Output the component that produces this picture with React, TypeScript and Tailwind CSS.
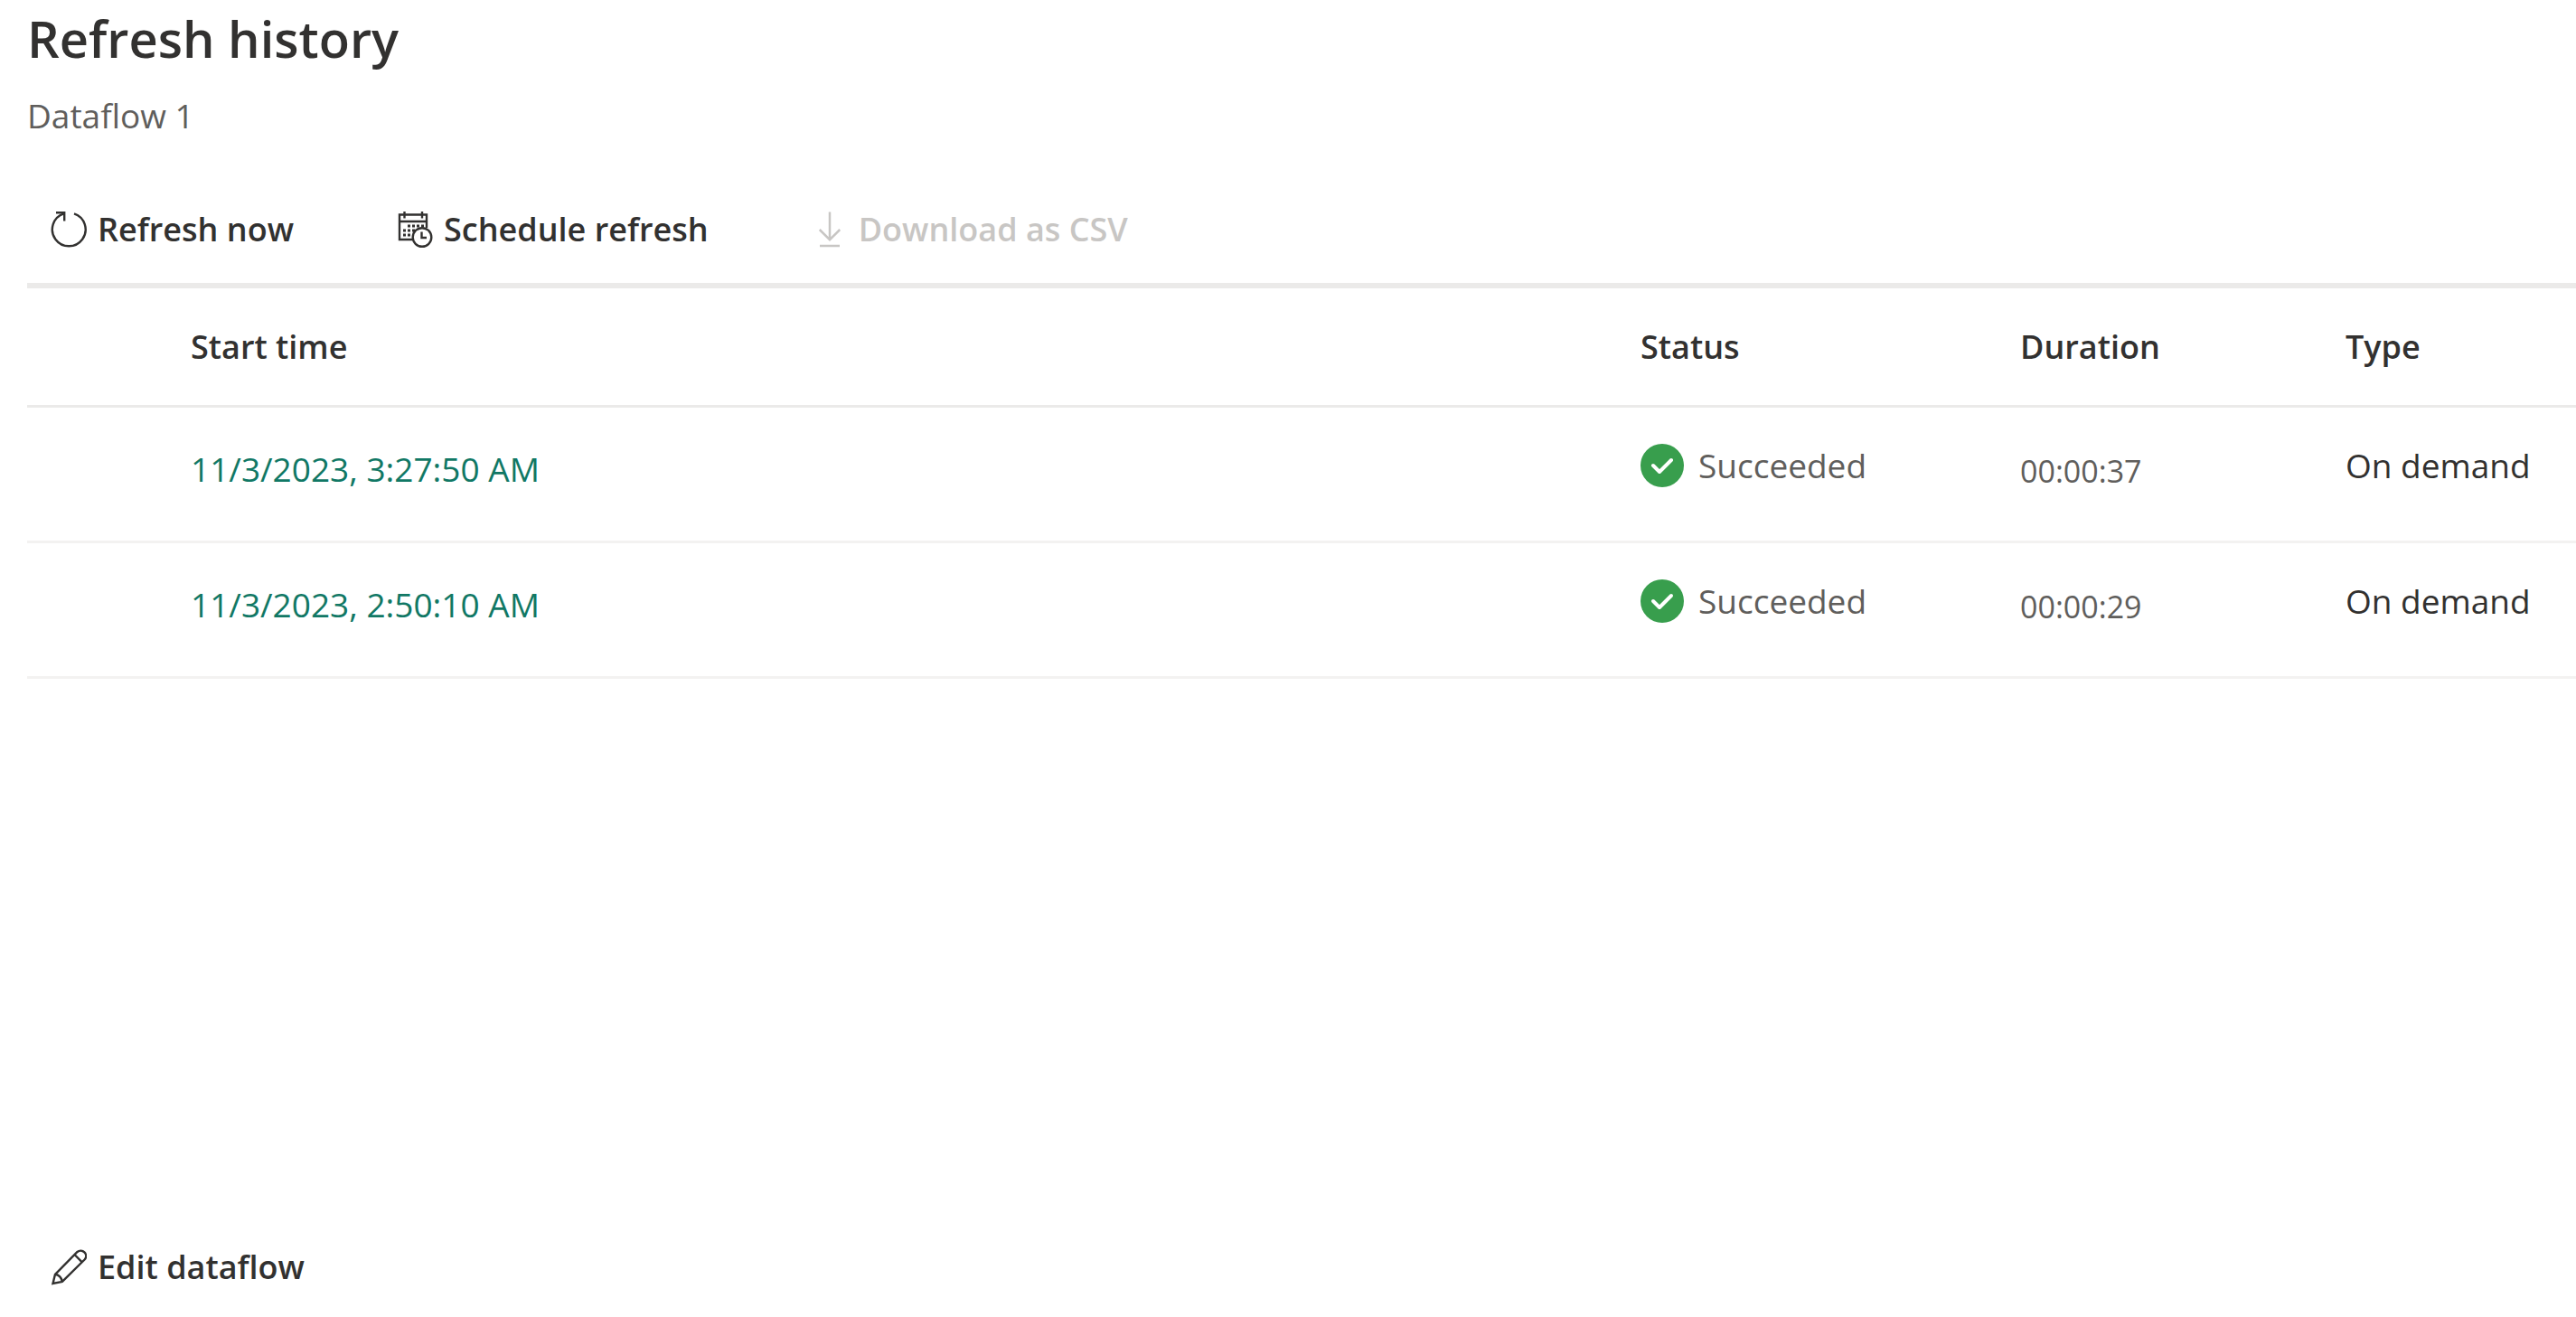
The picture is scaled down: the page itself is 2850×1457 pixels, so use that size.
import type { ReactNode } from "react";

type Run = { start: string; status: string; duration: string; type: string };

const runs: Run[] = [
  { start: "11/3/2023, 3:27:50 AM", status: "Succeeded", duration: "00:00:37", type: "On demand" },
  { start: "11/3/2023, 2:50:10 AM", status: "Succeeded", duration: "00:00:29", type: "On demand" },
];

function RefreshIcon() {
  return (
    <svg className="size-10 shrink-0" viewBox="0 0 40 40" fill="none" stroke="currentColor" strokeWidth="2.400" aria-hidden="true">
      <path d="M26 2.400A18.400 18.400 0 1 1 14.500 2.400" />
      <path d="M6 1.200h9.200v9.300" />
    </svg>
  );
}

function ScheduleIcon() {
  return (
    <svg className="size-10 shrink-0" viewBox="0 0 40 40" fill="none" stroke="currentColor" strokeWidth="2.400" aria-hidden="true">
      <path d="M17 31H3V3.500h30V18M3 11h30M8.500 0v7.500M28 0v7.500" />
      <path d="M12 16h3M17 16h3M22 16h3M27 16h3M7 21h3M12 21h3M17 21h3M7 26h3M12 26h3" strokeWidth="2.800" />
      <circle cx="28" cy="28.500" r="10.300" />
      <path d="M27.500 22.500V29h5.500" strokeWidth="2.400" />
    </svg>
  );
}

function DownloadIcon() {
  return (
    <svg className="size-10 shrink-0" viewBox="0 0 40 40" fill="none" stroke="currentColor" strokeWidth="2.500" aria-hidden="true">
      <path d="M20 .500V31M8.800 20 20 31.200 31.200 20M9 38h22" />
    </svg>
  );
}

function EditIcon() {
  return (
    <svg className="size-10 shrink-0" viewBox="0 0 40 40" fill="none" stroke="currentColor" strokeWidth="2.400" aria-hidden="true">
      <path d="M2.500 38 5 27.800 29.500 3A5.900 5.900 0 0 1 37.800 11.300L12.900 35.900ZM5 27.800Q11.500 29 12.900 35.900M26.500 6l8.300 8.300" />
    </svg>
  );
}

function CommandButton({ icon, label, disabled }: { icon: ReactNode; label: string; disabled?: boolean }) {
  return (
    <button
      type="button"
      disabled={disabled}
      className="flex items-center gap-3 text-[36px] leading-[52px] font-semibold whitespace-nowrap disabled:text-[#c8c6c4]"
    >
      {icon}
      {label}
    </button>
  );
}

export default function App() {
  return (
    <main className="flex min-h-screen flex-col bg-white pl-[30px] font-['Open_Sans','Noto_Sans',sans-serif] text-[#323130]">
      <h1 className="text-[56px] leading-[84px] font-semibold">Refresh history</h1>
      <p className="mt-[18px] text-[37px] leading-[52px] text-[#605e5c]">Dataflow 1</p>
      <div role="toolbar" aria-label="Refresh commands" className="mt-[74px] flex h-[91px] items-start gap-[114px] border-b-6 border-[#ebeae9] pl-[26px]">
        <CommandButton icon={<RefreshIcon />} label="Refresh now" />
        <CommandButton icon={<ScheduleIcon />} label="Schedule refresh" />
        <CommandButton icon={<DownloadIcon />} label="Download as CSV" disabled />
      </div>
      <table className="w-full table-fixed border-separate border-spacing-0 text-left text-[37px] leading-[52px]">
        <colgroup>
          <col className="w-[181px]" />
          <col />
          <col className="w-[420px]" />
          <col className="w-[360px]" />
          <col className="w-[255px]" />
        </colgroup>
        <thead>
          <tr className="h-[132px] text-[36px] *:border-b-3 *:border-[#ebeae9] *:font-semibold">
            <td />
            <th scope="col">Start time</th>
            <th scope="col">Status</th>
            <th scope="col">Duration</th>
            <th scope="col">Type</th>
          </tr>
        </thead>
        <tbody>
          {runs.map((run) => (
            <tr key={run.start} className="h-[150px] *:border-b-3 *:border-[#f3f2f1] *:align-top">
              <td />
              <td className="pt-[42px]">
                <a href="#" className="text-[#117865]">{run.start}</a>
              </td>
              <td className="pt-[38px] text-[#605e5c]">
                <span className="flex items-center gap-4">
                  <svg className="size-12 shrink-0" viewBox="0 0 48 48" fill="none" aria-hidden="true">
                    <circle cx="24" cy="24" r="24" fill="#389e4d" />
                    <path d="M14 24l7 7L34 18" stroke="white" strokeWidth="4" strokeLinecap="round" strokeLinejoin="round" />
                  </svg>
                  {run.status}
                </span>
              </td>
              <td className="pt-[46px] text-[34px] leading-[48px] text-[#605e5c]">{run.duration}</td>
              <td className="pt-[38px] whitespace-nowrap">{run.type}</td>
            </tr>
          ))}
        </tbody>
      </table>
      <footer className="mt-auto pb-[29px] pl-[26px]">
        <CommandButton icon={<EditIcon />} label="Edit dataflow" />
      </footer>
    </main>
  );
}
